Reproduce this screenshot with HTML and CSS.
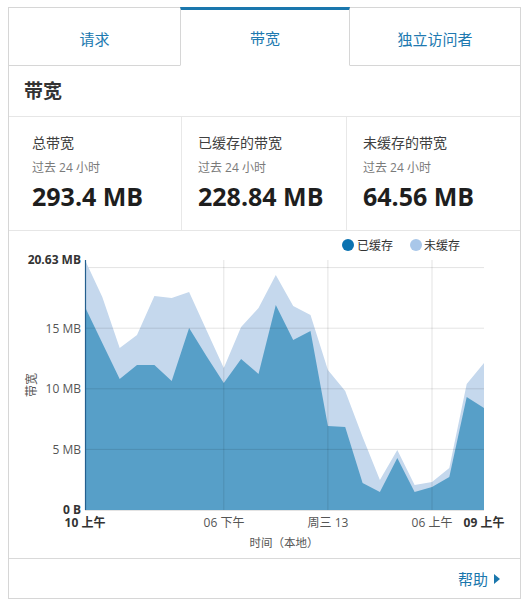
FILE: index.html
```html
<!DOCTYPE html>
<html lang="zh-CN">
<head>
<meta charset="utf-8">
<title>带宽</title>
<link rel="stylesheet" href="styles.css">
</head>
<body>
<div class="card">
  <div class="tabs">
    <div class="tab">请求</div>
    <div class="tab active">带宽</div>
    <div class="tab">独立访问者</div>
  </div>
  <div class="heading">带宽</div>
  <div class="stats">
    <div class="stat s1">
      <div class="stat-label">总带宽</div>
      <div class="stat-sub">过去 24 小时</div>
      <div class="stat-value">293.4 MB</div>
    </div>
    <div class="stat s2">
      <div class="stat-label">已缓存的带宽</div>
      <div class="stat-sub">过去 24 小时</div>
      <div class="stat-value">228.84 MB</div>
    </div>
    <div class="stat s3">
      <div class="stat-label">未缓存的带宽</div>
      <div class="stat-sub">过去 24 小时</div>
      <div class="stat-value">64.56 MB</div>
    </div>
  </div>
  <div class="chart">
    <svg class="chart-svg" width="511" height="327" viewBox="9 231 511 327" xmlns="http://www.w3.org/2000/svg">
      <circle cx="348" cy="245" r="6" fill="#0b72b0"/>
      <text class="legend" x="357" y="249.6">已缓存</text>
      <circle cx="416" cy="245" r="6" fill="#a9c7e9"/>
      <text class="legend" x="424" y="249.6">未缓存</text>

      <line class="grid" x1="85" y1="267.6" x2="484" y2="267.6"/>
      <line class="grid" x1="85" y1="510.5" x2="484" y2="510.5"/>

      <path fill="#c5d8ed" d="M85,510 L85,260 L102.3,297 L119.7,348 L137,335 L154.4,296 L171.7,298 L189.1,292 L206.4,330 L223.8,368 L241.1,327 L258.5,308 L275.8,275 L293.2,306 L310.5,315 L327.9,370 L345.2,391 L362.6,437 L379.9,480 L397.3,450 L414.6,485 L432,482 L449.3,468 L466.7,384 L484,363 L484,510 Z"/>
      <path fill="#579fc8" d="M85,510 L85,307 L102.3,343 L119.7,379 L137,365 L154.4,365 L171.7,381 L189.1,328 L206.4,356 L223.8,383 L241.1,359 L258.5,374 L275.8,305 L293.2,340 L310.5,331 L327.9,426 L345.2,427 L362.6,483 L379.9,492 L397.3,458 L414.6,492 L432,487 L449.3,477 L466.7,397 L484,408 L484,510 Z"/>

      <line class="grid-over" x1="85" y1="328.2" x2="484" y2="328.2"/>
      <line class="grid-over" x1="85" y1="388.8" x2="484" y2="388.8"/>
      <line class="grid-over" x1="85" y1="449.4" x2="484" y2="449.4"/>
      <line class="grid-over" x1="223.8" y1="260" x2="223.8" y2="510"/>
      <line class="grid-over" x1="327.9" y1="260" x2="327.9" y2="510"/>
      <line class="grid-over" x1="432" y1="260" x2="432" y2="510"/>
      <line class="axis" x1="85.5" y1="260" x2="85.5" y2="510"/>

      <text class="ylab bold" x="81" y="264.3" text-anchor="end">20.63 MB</text>
      <text class="ylab" x="81" y="332.5" text-anchor="end">15 MB</text>
      <text class="ylab" x="81" y="393" text-anchor="end">10 MB</text>
      <text class="ylab" x="81" y="453.7" text-anchor="end">5 MB</text>
      <text class="ylab bold" x="81" y="514.3" text-anchor="end">0 B</text>
      <text class="ytitle" transform="translate(35.6,385) rotate(-90)" text-anchor="middle">带宽</text>

      <text class="xlab bold" x="85" y="526.5" text-anchor="middle">10 上午</text>
      <text class="xlab" x="224" y="526.5" text-anchor="middle">06 下午</text>
      <text class="xlab" x="328" y="526.5" text-anchor="middle">周三 13</text>
      <text class="xlab" x="432" y="526.5" text-anchor="middle">06 上午</text>
      <text class="xlab bold" x="484" y="526.5" text-anchor="middle">09 上午</text>
      <text class="xtitle" x="284" y="547" text-anchor="middle">时间（本地）</text>
    </svg>
  </div>
  <div class="footer">
    <a class="help">帮助<span class="tri"></span></a>
  </div>
</div>
</body>
</html>
```

FILE: styles.css
```css
body {
  margin: 7px 0 0 8px;
  background: #ffffff;
  font-family: "Open Sans", "Noto Sans CJK SC", sans-serif;
  color: #333333;
}

.card {
  width: 513px;
  box-sizing: border-box;
  border: 1px solid #d6d6d6;
  border-top: none;
}

.tabs {
  display: grid;
  grid-template-columns: 171px 170px 1fr;
}

.tab {
  height: 59px;
  box-sizing: border-box;
  padding-top: 3px;
  border-top: 1px solid #d6d6d6;
  border-bottom: 1px solid #d6d6d6;
  display: flex;
  align-items: center;
  justify-content: center;
  color: #2079b0;
  font-size: 15px;
}

.tab.active {
  padding-top: 0;
  border-top: 3px solid #1a77ad;
  border-left: 1px solid #d6d6d6;
  border-right: 1px solid #d6d6d6;
  border-bottom-color: transparent;
}

.heading {
  height: 51px;
  box-sizing: border-box;
  padding: 14px 15px 0;
  font-size: 19px;
  line-height: 22px;
  font-weight: bold;
  color: #333333;
  border-bottom: 1px solid #e6e6e6;
}

.stats {
  display: grid;
  grid-template-columns: 172px 165px 1fr;
  border-bottom: 1px solid #e6e6e6;
}

.stat {
  padding: 17px 0 19px 16px;
}

.stat.s1 {
  padding-left: 23px;
}

.stat.s2,
.stat.s3 {
  border-left: 1px solid #e8e8e8;
}

.stat-label {
  font-size: 14px;
  line-height: 18px;
  color: #404040;
}

.stat-sub {
  margin-top: 8px;
  font-size: 12px;
  line-height: 16px;
  color: #7a7a7a;
}

.stat-value {
  margin-top: 5px;
  font-size: 25px;
  line-height: 30px;
  font-weight: bold;
  color: #1e1e1e;
}

.chart {
  height: 327px;
  border-bottom: 1px solid #d9d9d9;
}

.chart-svg {
  display: block;
  font-family: "Open Sans", "Noto Sans CJK SC", sans-serif;
}

.chart-svg .legend {
  font-size: 12px;
  fill: #333333;
}

.chart-svg .grid {
  stroke: #e3e3e3;
  stroke-width: 1;
}

.chart-svg .grid-over {
  stroke: rgba(0, 0, 0, 0.11);
  stroke-width: 1;
}

.chart-svg .axis {
  stroke: #245f8e;
  stroke-width: 1.2;
}

.chart-svg .ylab,
.chart-svg .xlab {
  font-size: 12px;
  fill: #555555;
}

.chart-svg .bold {
  font-weight: bold;
  fill: #333333;
}

.chart-svg .ytitle {
  font-size: 12px;
  fill: #555555;
}

.chart-svg .xtitle {
  font-size: 11.5px;
  fill: #555555;
}

.footer {
  height: 39px;
  display: flex;
  align-items: center;
  justify-content: flex-end;
  padding-right: 20px;
}

.help {
  display: flex;
  align-items: center;
  gap: 6px;
  font-size: 15px;
  color: #1a77ad;
  text-decoration: none;
}

.tri {
  width: 0;
  height: 0;
  border-left: 6px solid #1a77ad;
  border-top: 5.5px solid transparent;
  border-bottom: 5.5px solid transparent;
}
```
